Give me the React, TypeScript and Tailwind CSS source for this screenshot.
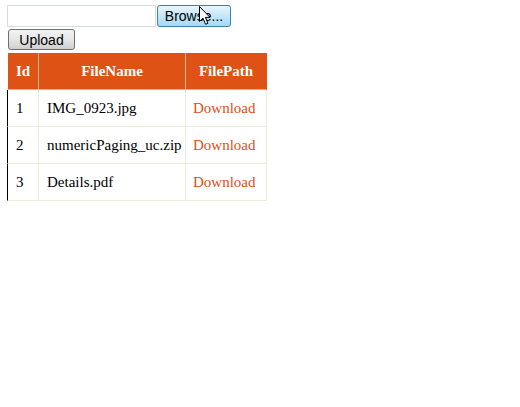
import React from "react";

type FileRow = {
  id: number;
  name: string;
};

const files: FileRow[] = [
  { id: 1, name: "IMG_0923.jpg" },
  { id: 2, name: "numericPaging_uc.zip" },
  { id: 3, name: "Details.pdf" },
];

// Classic arrow pointer drawn over the browse button
function Pointer() {
  return (
    <svg
      width="13"
      height="20"
      viewBox="0 0 13 20"
      className="absolute left-[199px] top-[6px]"
    >
      <path
        d="M0.5 0.5 L0.5 15.5 L4 12.2 L6.6 18.3 L8.9 17.3 L6.4 11.4 L11 11.4 Z"
        fill="#fff"
        stroke="#000"
        strokeWidth="1"
        strokeLinejoin="miter"
      />
    </svg>
  );
}

export default function App() {
  return (
    <div className="relative w-[520px] h-[407px] bg-white">
      <div className="flex pl-[7px] pt-[5px] gap-[1px] font-['Liberation_Sans',Arial,sans-serif]">
        <input
          type="text"
          className="block w-[149px] h-[22px] border border-[#d6dbe4] bg-white outline-none"
        />
        <button className="block w-[74px] h-[22px] rounded-[3px] border border-[#3c7fb1] bg-gradient-to-b from-[#eaf6fd] via-[#c4e6f8] to-[#a7d8f4] text-[14px] leading-none text-black">
          Browse...
        </button>
      </div>
      <Pointer />

      <div className="flex pl-[8px] mt-[2px] font-['Liberation_Sans',Arial,sans-serif]">
        <button className="block w-[67px] h-[21px] rounded-[3px] border border-[#707070] bg-gradient-to-b from-[#f3f3f3] via-[#e6e6e6] to-[#cfcfcf] text-[14px] leading-none text-black">
          Upload
        </button>
      </div>

      <table className="ml-[7px] mt-[3px] border-separate border-spacing-0 table-fixed w-[260px] font-['Liberation_Serif','Times_New_Roman',serif]">
        <colgroup>
          <col className="w-[32px]" />
          <col className="w-[147px]" />
          <col className="w-[81px]" />
        </colgroup>
        <thead>
          <tr className="h-[37px] text-white text-[15px] font-bold">
            <th className="p-0 border-l border-l-white bg-[#de5216] border-r border-r-[#c2b98c] border-b border-b-[#c2b98c]">
              Id
            </th>
            <th className="p-0 bg-[#de5216] border-r border-r-[#c2b98c] border-b border-b-[#c2b98c]">
              FileName
            </th>
            <th className="p-0 bg-[#de5216] border-r border-r-[#de5216] border-b border-b-[#c2b98c]">
              FilePath
            </th>
          </tr>
        </thead>
        <tbody>
          {files.map((f) => (
            <tr key={f.id} className="h-[37px] text-[15px] text-black">
              <td className="px-[8px] border-l border-l-black border-r border-b border-[#eeedd9]">
                {f.id}
              </td>
              <td className="px-[8px] border-r border-b border-[#eeedd9] whitespace-nowrap">
                {f.name}
              </td>
              <td className="px-[7px] border-r border-b border-[#eeedd9]">
                <a className="text-[#dd4f1a]">Download</a>
              </td>
            </tr>
          ))}
        </tbody>
      </table>
    </div>
  );
}
